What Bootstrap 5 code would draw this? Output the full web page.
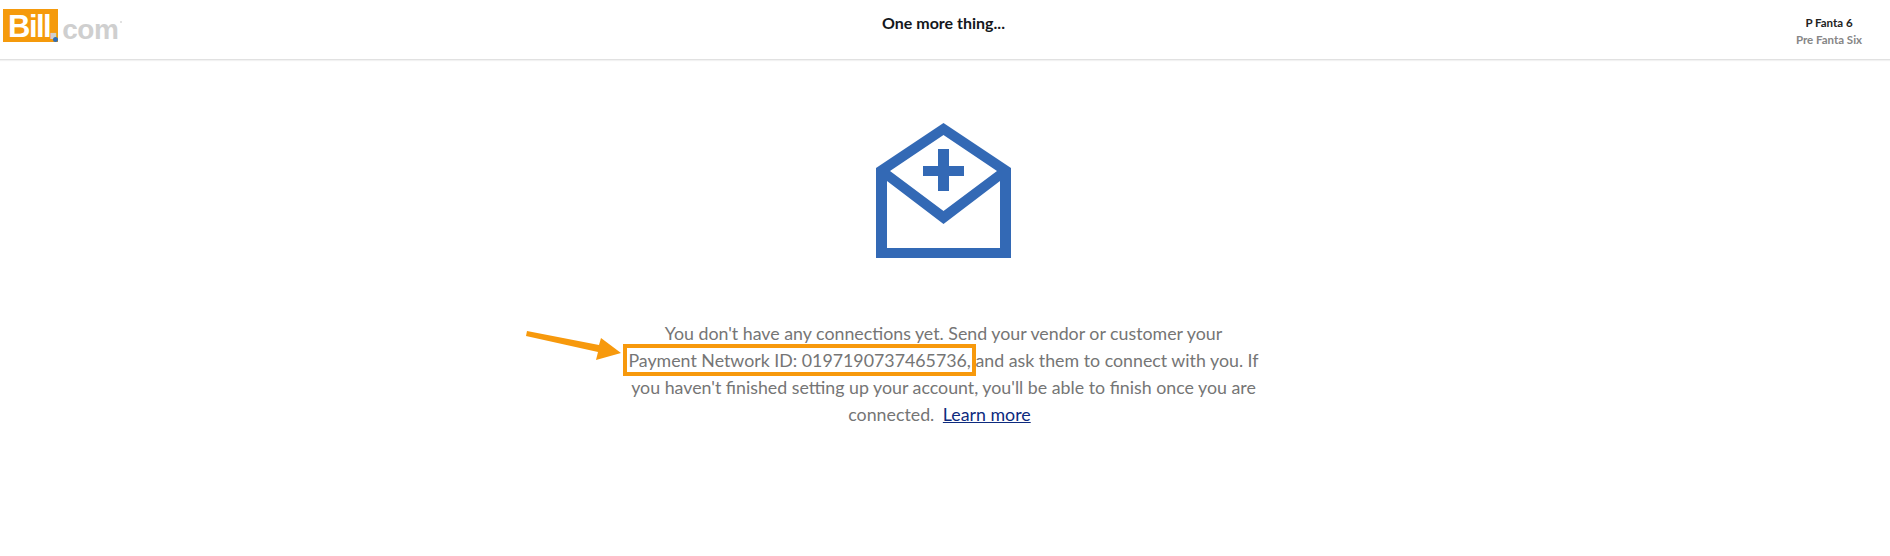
<!doctype html>
<html lang="en">
<head>
<meta charset="utf-8">
<title>One more thing...</title>
<link href="https://cdn.jsdelivr.net/npm/bootstrap@5.3.0/dist/css/bootstrap.min.css" rel="stylesheet">
<style>
body{font-family:Lato,"Liberation Sans",sans-serif;background:#fff;color:#757575;height:556px;overflow:hidden}
.top-bar{height:60px;border-bottom:1px solid #e1e1e1;box-shadow:0 1px 1px #f2f2f2}
.slot-left{width:197px}
.slot-right{width:200px}
.brand{font-family:"Liberation Sans",sans-serif;font-weight:700;margin:9px 0 0 3px;position:relative;width:125px}
.brand-bill{display:block;flex:none;background:#f59a0c;color:#fff;width:55px;height:33px;padding-left:5px;font-size:31px;line-height:35px;letter-spacing:-1.500px}
.brand-com{color:#cfcfcf;font-size:28px;line-height:33px;letter-spacing:-.4px;white-space:nowrap}
.brand-stop{font-size:40px;letter-spacing:0;margin-left:-10px;margin-right:3px}
.brand-dot{position:absolute;left:50px;top:28px;width:5px;height:5px;border-radius:50%;background:#2f6db5}
.brand-tm{position:absolute;left:117px;top:12px;width:2px;height:2px;border-radius:50%;background:#d8d8d8}
.page-title{font-weight:700;font-size:16px;color:#14171c;line-height:20px;padding-top:13px}
.acct{width:122px;padding-top:14px;font-size:11.5px;line-height:17px;font-weight:700}
.acct-name{color:#222}
.acct-org{color:#868686}
.hero{padding-top:63px;padding-right:3px}
.hero-icon{display:block;width:135px;height:135px}
.blurb{width:636px;font-size:17.8px;line-height:27px;margin-top:62px;position:relative;color:#757575}
.blurb a{color:#0d2a7e;margin-left:4px;margin-right:8px}
.hl{outline:4px solid #f7990c;outline-offset:1px;white-space:nowrap}
.arrow{position:absolute;left:-107px;top:5px;width:110px;height:40px}
</style>
</head>
<body>
<header class="top-bar d-flex justify-content-between align-items-start">
  <div class="slot-left">
    <div class="brand d-flex">
      <span class="brand-bill">Bill</span><span class="brand-com"><span class="brand-stop">.</span>com</span><span class="brand-dot"></span><span class="brand-tm"></span>
    </div>
  </div>
  <div class="page-title text-center">One more thing...</div>
  <div class="slot-right d-flex justify-content-end">
    <div class="acct text-center">
      <div class="acct-name">P Fanta 6</div>
      <div class="acct-org">Pre Fanta Six</div>
    </div>
  </div>
</header>
<main class="hero d-flex flex-column align-items-center">
  <svg class="hero-icon" viewBox="0 0 135 135" aria-hidden="true">
    <path fill="#3369b5" fill-rule="evenodd" d="M0 45 67.500 0 135 45V135H0ZM14 48 67.500 88 121 48 67.500 12ZM11 58V125H124V58L67.500 101Z"/>
    <path fill="#3369b5" d="M62 26H73V43H88V53H73V68H62V53H47V43H62Z"/>
  </svg>
  <p class="blurb text-center mb-0">
    <svg class="arrow" viewBox="0 0 110 40" aria-hidden="true"><path fill="#f7990c" d="M8 6 80 20 82 13 102 28 77 35 79 27 7 11Z"/></svg>
    You don't have any connections yet. Send your vendor or customer your
    <span class="hl">Payment Network ID: 0197190737465736,</span> and ask them to connect with you. If you haven't finished setting up your account, you'll be able to finish once you are connected. <a href="#">Learn more</a>
  </p>
</main>
</body>
</html>
